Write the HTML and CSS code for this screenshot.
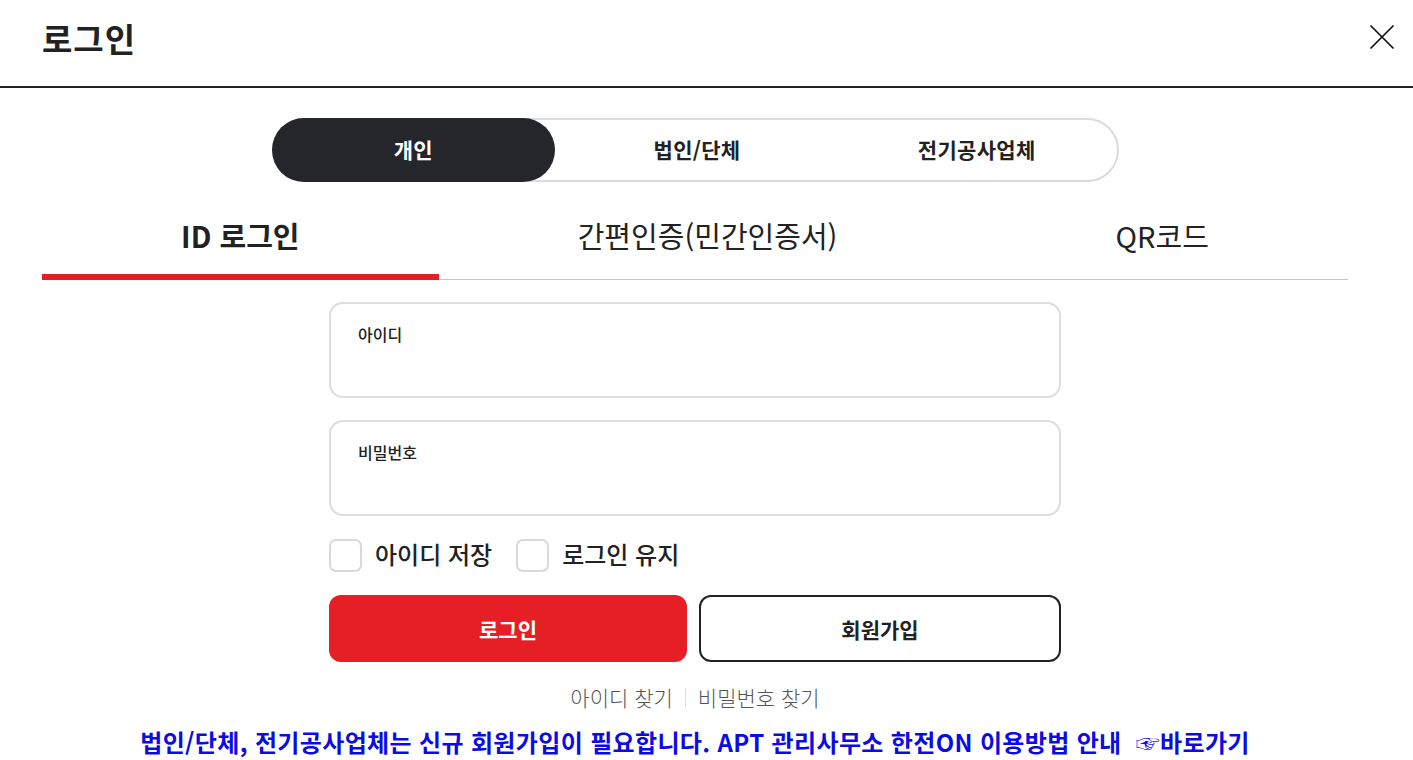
FILE: index.html
```html
<!DOCTYPE html>
<html lang="ko">
<head>
<meta charset="utf-8">
<title>로그인</title>
<link rel="stylesheet" href="styles.css">
</head>
<body>
<header class="header">
  <h1 class="title">로그인</h1>
  <button class="close" aria-label="닫기">
    <svg width="26" height="26" viewBox="0 0 26 26"><path d="M1.5 1.5 L24.5 24.5 M24.5 1.5 L1.5 24.5" stroke="#111" stroke-width="1.7" fill="none"/></svg>
  </button>
</header>
<main class="content">
  <div class="segment">
    <button class="seg-item active">개인</button>
    <button class="seg-item">법인/단체</button>
    <button class="seg-item">전기공사업체</button>
  </div>
  <nav class="tabs">
    <a class="tab active">ID 로그인</a>
    <a class="tab">간편인증(민간인증서)</a>
    <a class="tab">QR코드</a>
  </nav>
  <form class="form">
    <div class="field"><label class="field-label">아이디</label></div>
    <div class="field"><label class="field-label">비밀번호</label></div>
    <div class="checks">
      <label class="check"><span class="box"></span><span class="check-text">아이디 저장</span></label>
      <label class="check"><span class="box"></span><span class="check-text">로그인 유지</span></label>
    </div>
    <div class="buttons">
      <button type="button" class="btn btn-primary">로그인</button>
      <button type="button" class="btn btn-outline">회원가입</button>
    </div>
    <div class="finds">
      <a class="find">아이디 찾기</a><span class="divider"></span><a class="find">비밀번호 찾기</a>
    </div>
  </form>
  <p class="notice">법인/단체, 전기공사업체는 신규 회원가입이 필요합니다. APT 관리사무소 한전ON 이용방법 안내 &nbsp;☞바로가기</p>
</main>
</body>
</html>
```
FILE: styles.css
```css
* { box-sizing: border-box; }
html, body { margin: 0; padding: 0; background: #fff; }
body {
  font-family: "Noto Sans CJK KR", "Noto Sans", "Liberation Sans", sans-serif;
  color: #222;
  width: 1413px;
  height: 760px;
  overflow: hidden;
}
button { font-family: inherit; cursor: pointer; margin: 0; }

.header {
  height: 88px;
  border-bottom: 2px solid #222;
  display: flex;
  align-items: center;
  justify-content: space-between;
  padding: 0 18px 10px 42px;
}
.title {
  margin: 0;
  font-size: 33px;
  font-weight: 700;
  color: #222;
  letter-spacing: 1px;
}
.close {
  border: 0;
  background: none;
  padding: 0;
  width: 26px;
  height: 26px;
  display: flex;
  margin-bottom: 2px;
}

.content {
  width: 1306px;
  margin-left: 42px;
  display: flex;
  flex-direction: column;
  align-items: center;
}

.segment {
  margin-top: 30px;
  width: 847px;
  height: 64px;
  border: 2px solid #dadbdf;
  border-radius: 32px;
  display: flex;
}
.seg-item {
  flex: 1;
  border: 0;
  background: none;
  font-size: 21px;
  font-weight: 700;
  color: #222;
  border-radius: 32px;
  margin: -2px;
  padding: 0 0 2px;
  letter-spacing: 0.3px;
}
.seg-item.active {
  background: #24262b;
  color: #fff;
  margin-right: 2px;
}

.tabs {
  margin-top: 14px;
  width: 100%;
  display: flex;
  border-bottom: 1px solid #c6c6c6;
}
.tab {
  flex: 1 1 auto;
  height: 84px;
  margin-bottom: -1px;
  display: flex;
  align-items: center;
  justify-content: center;
  padding-bottom: 6px;
  font-size: 29px;
  font-weight: 400;
  color: #222;
}
.tab.active {
  font-weight: 700;
  box-shadow: inset 0 -6px 0 #e41e26;
}

.form {
  width: 732px;
  margin-top: 22px;
  display: flex;
  flex-direction: column;
}
.field {
  height: 96px;
  border: 2px solid #dcdde0;
  border-radius: 14px;
  padding: 19px 27px;
  margin-bottom: 22px;
}
.field-label {
  font-size: 16px;
  font-weight: 500;
  color: #222;
  line-height: 22px;
  display: block;
}

.checks {
  display: flex;
  gap: 24px;
  height: 34px;
  align-items: center;
}
.check {
  display: flex;
  align-items: center;
  gap: 13px;
}
.box {
  width: 33px;
  height: 33px;
  border: 2px solid #d8d9dd;
  border-radius: 7px;
}
.check-text {
  font-size: 24px;
  font-weight: 500;
  color: #222;
  padding-bottom: 3px;
}

.buttons {
  margin-top: 23px;
  display: flex;
  gap: 12px;
}
.btn {
  flex: 1 1 0;
  height: 67px;
  border-radius: 12px;
  font-size: 21px;
  font-weight: 700;
}
.btn-primary {
  background: #e61e25;
  border: 0;
  color: #fff;
}
.btn-outline {
  background: #fff;
  border: 2px solid #222;
  color: #222;
}

.finds {
  margin-top: 20px;
  display: flex;
  justify-content: center;
  align-items: center;
  font-size: 21px;
  font-weight: 300;
  color: #555;
  line-height: 30px;
}
.divider {
  width: 1px;
  height: 18px;
  background: #dcdcdc;
  margin: 2px 12px 0;
}

.notice {
  margin: 14px 0 0;
  font-size: 24px;
  font-weight: 700;
  color: #0b0be6;
  line-height: 32px;
  letter-spacing: 0.35px;
  white-space: nowrap;
}
```
